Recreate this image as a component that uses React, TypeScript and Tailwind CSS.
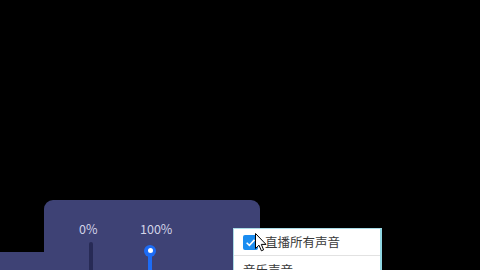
import React from "react";

export default function App() {
  return (
    <div
      className="relative w-[480px] h-[270px] overflow-hidden bg-black"
      style={{ fontFamily: '"Noto Sans CJK SC", "Noto Sans", sans-serif' }}
    >
      <div className="flex pt-[200px]">
        <div className="w-[44px] h-[30px] mt-[52px] bg-[#3e4275]" />
        <div className="w-[216px] h-[80px] rounded-t-[9px] bg-[#3e4275] pl-[35px] pt-[21px] flex">
          <div className="w-[61px] flex flex-col items-start">
            <span className="text-[12.5px] leading-[16px] text-[#d2d4e8]">0%</span>
            <div className="ml-[10px] mt-[5px] w-[4px] h-[40px] rounded-t-full bg-[#272a55]" />
          </div>
          <div className="w-[61px] flex flex-col items-start">
            <span className="text-[12.5px] leading-[16px] text-[#d2d4e8]">100%</span>
            <div className="relative ml-[8px] mt-[8px] w-[4px] h-[40px]">
              <div className="absolute left-0 top-[5px] w-[4px] h-[40px] bg-[#1d6cf5]" />
              <div className="absolute left-[-4px] top-[-0.5px] w-[12px] h-[12px] rounded-full bg-[#1d6cf5] flex items-center justify-center">
                <div className="w-[5px] h-[5px] rounded-full bg-white" />
              </div>
            </div>
          </div>
        </div>
      </div>

      <div className="absolute left-[233px] top-[228px] w-[149px] h-[60px] bg-white border border-[#a9dbe6] border-r-2 border-r-[#8fd6e2]">
        <div className="h-[27px] flex items-center pl-[9px] border-b border-[#e2e2e2]">
          <div className="w-[15px] h-[15px] rounded-[2px] bg-[#1a8cf0] flex items-center justify-center">
            <svg width="11" height="11" viewBox="0 0 10 10">
              <path d="M1.5 5.2 L4 7.6 L8.6 2.6" fill="none" stroke="white" strokeWidth="1.4" />
            </svg>
          </div>
          <span className="ml-[7px] text-[12.5px] leading-[16px] text-[#3a3a3a]">直播所有声音</span>
        </div>
        <div className="pl-[9px] pt-[6px] text-[12.5px] leading-[16px] text-[#3a3a3a]">音乐声音</div>
      </div>

      <svg
        className="absolute left-[255px] top-[233px]"
        width="12"
        height="19"
        viewBox="0 0 12 19"
      >
        <path
          d="M0.5 0.5 L0.5 15.5 L4 12.2 L6.4 17.8 L8.6 16.8 L6.3 11.4 L11 11.4 Z"
          fill="white"
          stroke="black"
          strokeWidth="1"
          strokeLinejoin="round"
        />
      </svg>
    </div>
  );
}
